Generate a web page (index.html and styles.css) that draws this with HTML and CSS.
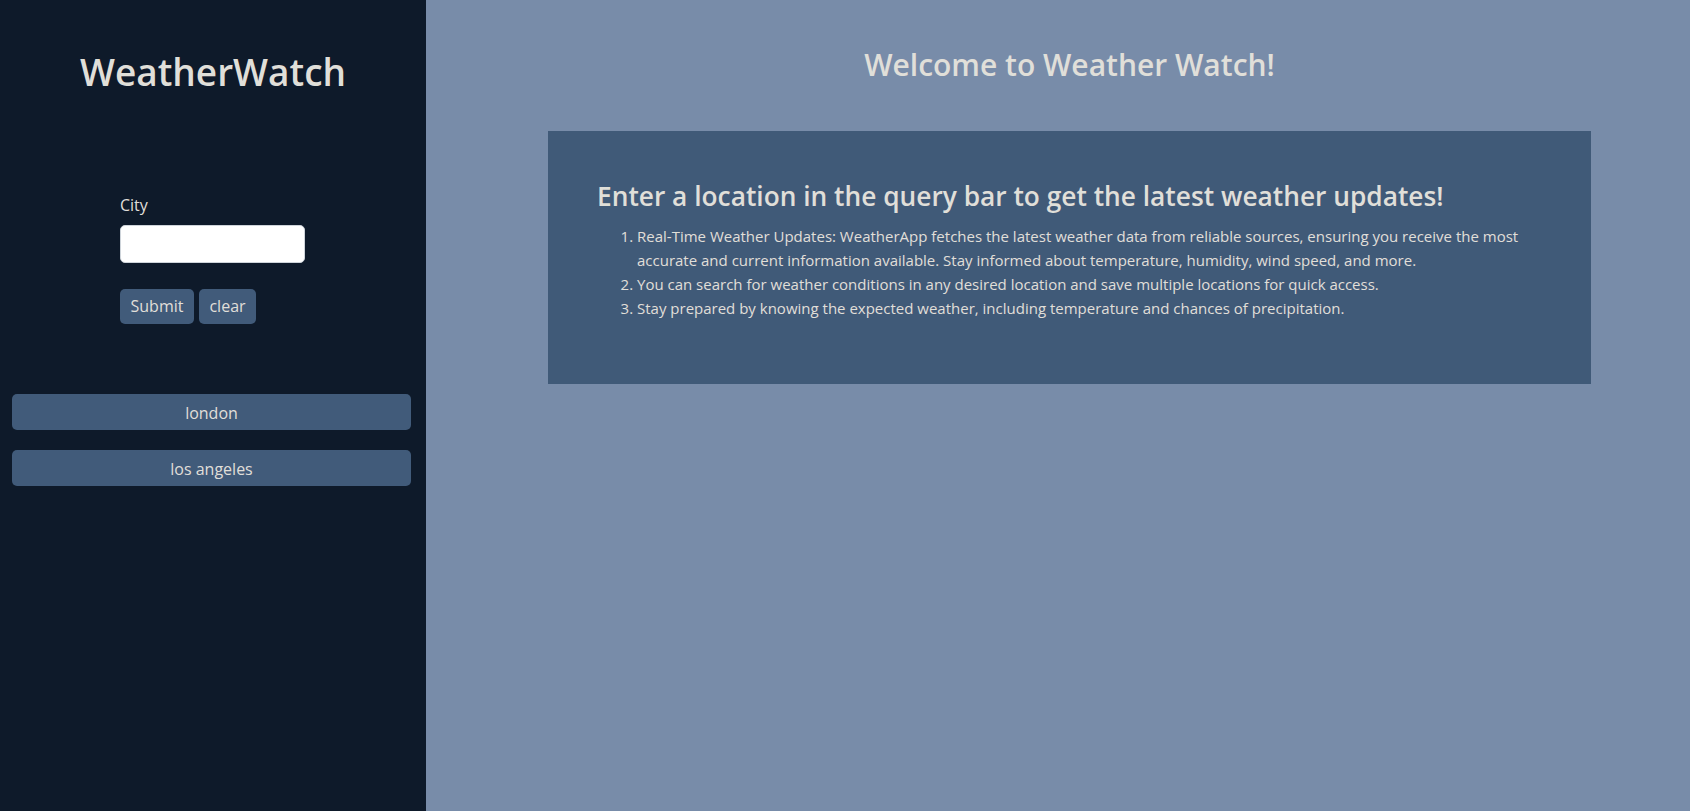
FILE: index.html
```html
<!DOCTYPE html>
<html lang="en">
<head>
<meta charset="utf-8">
<title>WeatherWatch</title>
<link rel="stylesheet" href="styles.css">
</head>
<body>
<div class="app">
  <aside class="sidebar">
    <h1 class="brand">WeatherWatch</h1>
    <form class="search">
      <label class="label" for="city">City</label>
      <input class="input" id="city" type="text">
      <div class="actions">
        <button type="button" class="btn btn-submit">Submit</button>
        <button type="button" class="btn btn-clear">clear</button>
      </div>
    </form>
    <div class="saved">
      <button type="button" class="saved-btn">london</button>
      <button type="button" class="saved-btn">los angeles</button>
    </div>
  </aside>
  <main class="main">
    <h2 class="welcome">Welcome to Weather Watch!</h2>
    <section class="card">
      <h3 class="card-title">Enter a location in the query bar to get the latest weather updates!</h3>
      <ol class="features">
        <li>Real-Time Weather Updates: WeatherApp fetches the latest weather data from reliable sources, ensuring you receive the most accurate and current information available. Stay informed about temperature, humidity, wind speed, and more.</li>
        <li>You can search for weather conditions in any desired location and save multiple locations for quick access.</li>
        <li>Stay prepared by knowing the expected weather, including temperature and chances of precipitation.</li>
      </ol>
    </section>
  </main>
</div>
</body>
</html>
```
FILE: styles.css
```css
* { box-sizing: border-box; }
html, body { margin: 0; height: 100%; }
body {
  font-family: "Open Sans", "Noto Sans", sans-serif;
  font-size: 16px;
  line-height: 1.5;
  color: #e0dfd9;
  background: #788ca9;
}
.app {
  display: flex;
  min-height: 100vh;
}
.sidebar {
  width: 426px;
  flex: 0 0 426px;
  background: #0e1a2a;
  padding-top: 50px;
}
.brand {
  margin: 0;
  font-size: 37px;
  line-height: 1.2;
  font-weight: 600;
  text-align: center;
  color: #e0dfd9;
}
.search {
  width: 186px;
  margin: 99px auto 0;
  display: flex;
  flex-direction: column;
}
.label {
  display: block;
  margin-bottom: 8px;
}
.input {
  width: 185px;
  height: 38px;
  border: 1px solid #ced4da;
  border-radius: 5px;
  background: #fff;
  font: inherit;
  padding: 6px 12px;
}
.actions {
  display: flex;
  gap: 5px;
  margin-top: 26px;
}
.btn {
  font: inherit;
  color: #e0dfd9;
  background: #415b7a;
  border: 0;
  border-radius: 5px;
  height: 35px;
  padding: 0;
  line-height: 35px;
  text-align: center;
}
.btn-submit { width: 74px; }
.btn-clear { width: 57px; }
.saved {
  display: flex;
  flex-direction: column;
  gap: 20px;
  margin: 70px 15px 0 12px;
}
.saved-btn {
  font: inherit;
  color: #e0dfd9;
  background: #415b7a;
  border: 0;
  border-radius: 5px;
  height: 36px;
  line-height: 36px;
  text-align: center;
}
.main {
  flex: 1;
  padding: 47px 99px 0 122px;
}
.welcome {
  margin: 0;
  font-size: 30px;
  line-height: 1.2;
  font-weight: 600;
  text-align: center;
  color: #e0dfd9;
}
.card {
  margin-top: 48px;
  background: #405a78;
  padding: 50px 49px 64px 49px;
}
.card-title {
  margin: 0 0 11px;
  font-size: 26.3px;
  line-height: 1.2;
  font-weight: 600;
  color: #e0dfd9;
}
.features {
  margin: 0;
  padding-left: 40px;
  font-size: 15px;
  line-height: 24px;
}
```
